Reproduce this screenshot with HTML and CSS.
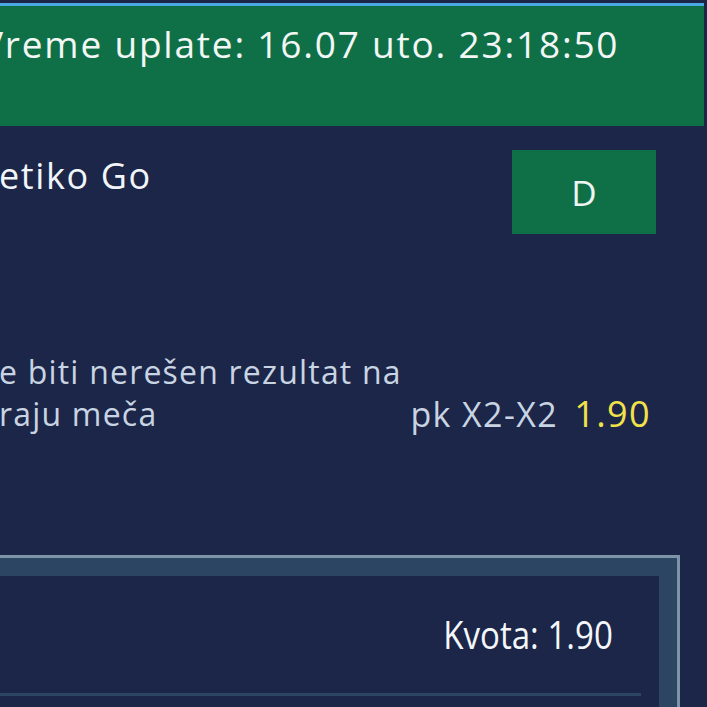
FILE: index.html
```html
<!DOCTYPE html>
<html>
<head>
<meta charset="utf-8">
<link rel="stylesheet" href="styles.css">
</head>
<body>
<div class="page">
  <div class="gap-top"></div>
  <header class="paid">
    <span class="paid-text">Vreme uplate: 16.07 uto. 23:18:50</span>
  </header>
  <section class="event">
    <div class="event-name">etiko Go</div>
    <div class="pick">D</div>
  </section>
  <section class="bet">
    <div class="bet-desc">e biti nerešen rezultat na<br>raju meča</div>
    <div class="bet-odd"><span class="code">pk X2-X2</span><span class="odd">1.90</span></div>
  </section>
  <section class="summary">
    <div class="summary-inner">
      <div class="kvota"><span class="cond">Kvota: 1.90</span></div>
      <div class="divider"></div>
    </div>
  </section>
</div>
</body>
</html>
```
FILE: styles.css
```css
html, body {
  margin: 0;
  padding: 0;
  background: #1b2649;
  overflow: hidden;
}
body {
  width: 707px;
  height: 707px;
  font-family: "Open Sans", "Liberation Sans", sans-serif;
}
.page {
  display: flex;
  flex-direction: column;
}
.gap-top {
  height: 3px;
  background: #1b2649;
}
.paid {
  width: 704px;
  height: 120px;
  border-top: 3px solid #4aa9e4;
  background: #0f7048;
  color: #f2f7f5;
  box-sizing: content-box;
}
.paid-text {
  display: block;
  margin-left: -19px;
  padding-top: 14px;
  font-size: 37px;
  letter-spacing: 1.8px;
  line-height: 48px;
  white-space: nowrap;
}
.event {
  display: flex;
  justify-content: space-between;
  align-items: flex-start;
  padding-top: 24px;
  padding-right: 51px;
  height: 220px;
  box-sizing: border-box;
}
.event-name {
  color: #f2f5f7;
  font-size: 36px;
  letter-spacing: 1.6px;
  line-height: 44px;
  margin-top: 4px;
  margin-left: -1px;
}
.pick {
  width: 144px;
  height: 84px;
  background: #0f7048;
  color: #eef5f2;
  font-size: 35px;
  display: flex;
  align-items: center;
  justify-content: center;
}
.bet {
  display: flex;
  justify-content: space-between;
  align-items: flex-end;
  padding-right: 56px;
  color: #c9d4e2;
  font-size: 32px;
  letter-spacing: 1.2px;
  line-height: 42px;
  height: 89px;
}
.bet-desc {
  margin-left: -1px;
}
.bet-odd {
  display: flex;
  align-items: baseline;
  gap: 16px;
  font-size: 34px;
  letter-spacing: 1.4px;
}
.odd {
  color: #f2e24a;
  font-size: 36px;
}
.summary {
  margin-top: 120px;
  width: 659px;
  border-top: 3px solid #7d93a7;
  border-right: 3px solid #7d93a7;
  background: #2c4563;
  padding: 18px 18px 0 0;
  box-sizing: content-box;
}
.summary-inner {
  background: #1b2649;
  height: 200px;
  padding-right: 18px;
}
.kvota {
  display: flex;
  justify-content: flex-end;
  padding-right: 28px;
  padding-top: 36px;
  height: 81px;
  color: #f4f7fa;
  font-size: 38px;
  line-height: 44px;
}
.cond {
  display: inline-block;
  transform: scaleX(0.87);
  transform-origin: right center;
}
.divider {
  height: 3px;
  background: #2c4563;
}
```
